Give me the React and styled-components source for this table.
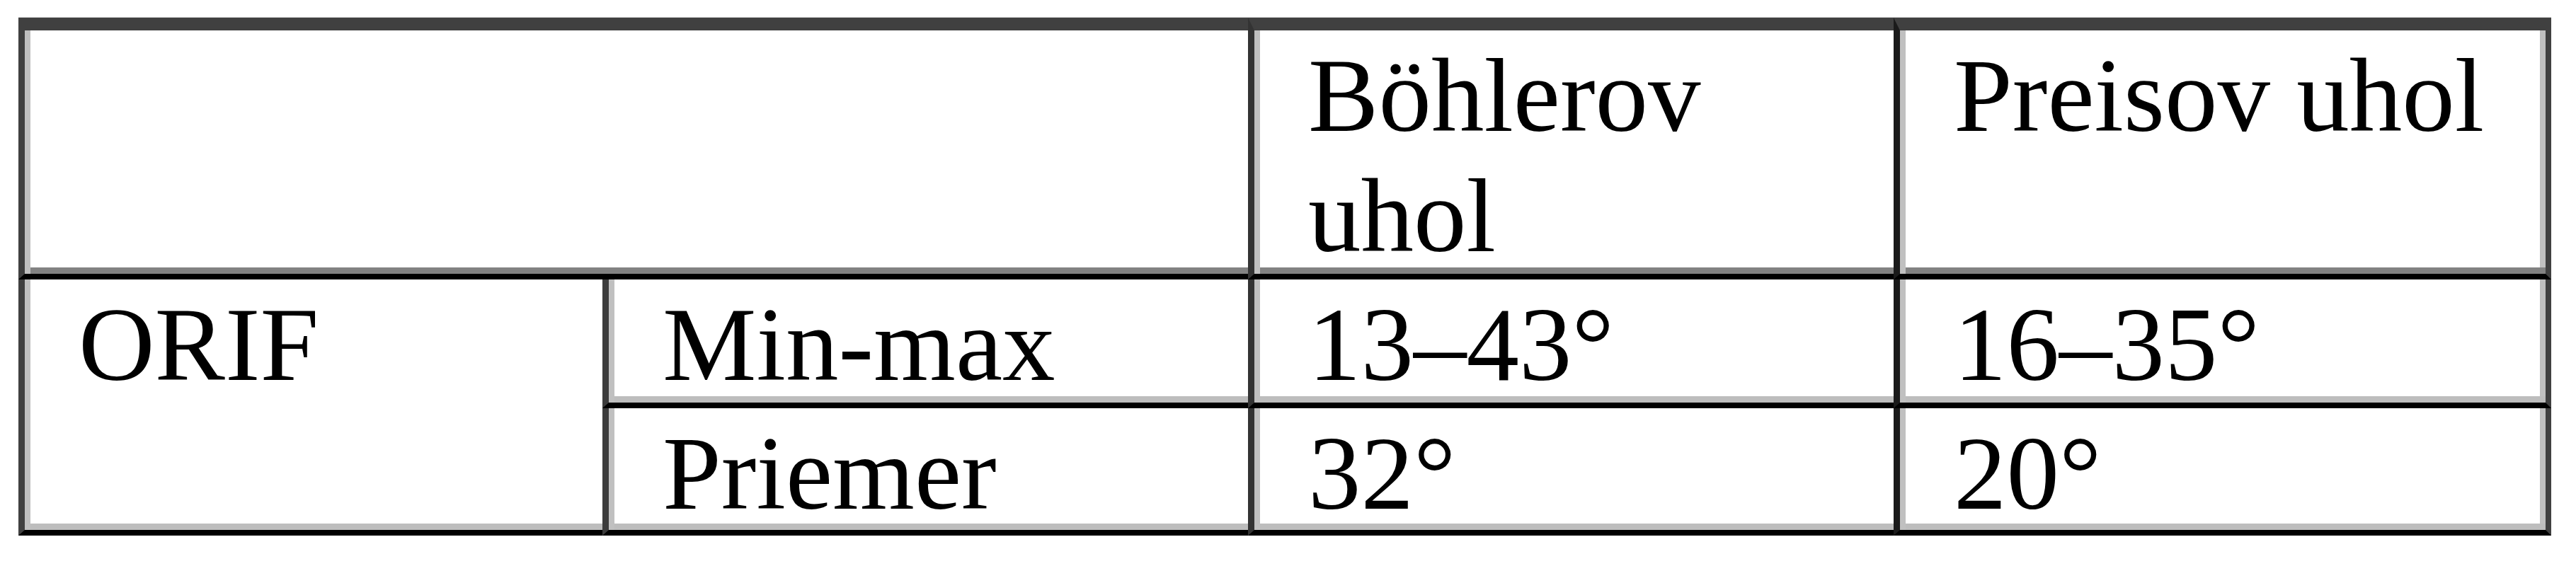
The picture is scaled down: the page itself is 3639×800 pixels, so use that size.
import styled, { createGlobalStyle } from 'styled-components';

const GlobalStyle = createGlobalStyle`
  body {
    margin: 0;
    background: #ffffff;
  }
`;

const Page = styled.div`
  padding: 25px 0 0 26px;
`;

const Grid = styled.div`
  display: grid;
  grid-template-columns: 825px 912px 912px 929px;
  grid-template-rows: 370px 182px 180px;
  width: max-content;
  box-shadow: 0 -1px 0 #cfcfcf;
`;

const Cell = styled.div`
  box-sizing: border-box;
  grid-column: ${(p) => p.$col};
  grid-row: ${(p) => p.$row};
  border-left: 9px solid ${(p) => p.$line || '#404040'};
  border-top: ${(p) => (p.$top ? '18px solid #404040' : 'none')};
  border-bottom: 8px solid #000;
  border-right: ${(p) => (p.$last ? '8px solid #404040' : 'none')};
  box-shadow: inset 8px 0 0 #c0c0c0, inset 0 -9px 0 ${(p) => p.$shade || '#bdbdbd'}
    ${(p) => (p.$last ? ', inset -8px 0 0 #c0c0c0' : '')};
  padding: 7px 0 0 76px;
  font-family: 'Liberation Serif', 'Times New Roman', serif;
  font-size: 149px;
  line-height: 170px;
  color: #000;
  white-space: nowrap;
`;

const Header = styled.span`
  display: block;
  white-space: normal;
  width: 600px;
`;

const App = () => {
  return (
    <Page>
      <GlobalStyle />
      <Grid>
        <Cell $col="1 / span 2" $row="1" $top $shade="#828282" />
        <Cell $col="3" $row="1" $top $shade="#828282" $line="#333">
          <Header>Böhlerov uhol</Header>
        </Cell>
        <Cell $col="4" $row="1" $top $shade="#828282" $line="#1a1a1a" $last>
          Preisov uhol
        </Cell>

        <Cell $col="1" $row="2 / span 2">ORIF</Cell>
        <Cell $col="2" $row="2" $line="#3c3c3c">Min-max</Cell>
        <Cell $col="3" $row="2" $line="#333">13–43°</Cell>
        <Cell $col="4" $row="2" $line="#1a1a1a" $last>16–35°</Cell>

        <Cell $col="2" $row="3" $line="#3c3c3c">Priemer</Cell>
        <Cell $col="3" $row="3" $line="#333">32°</Cell>
        <Cell $col="4" $row="3" $line="#1a1a1a" $last>20°</Cell>
      </Grid>
    </Page>
  );
};

export default App;
